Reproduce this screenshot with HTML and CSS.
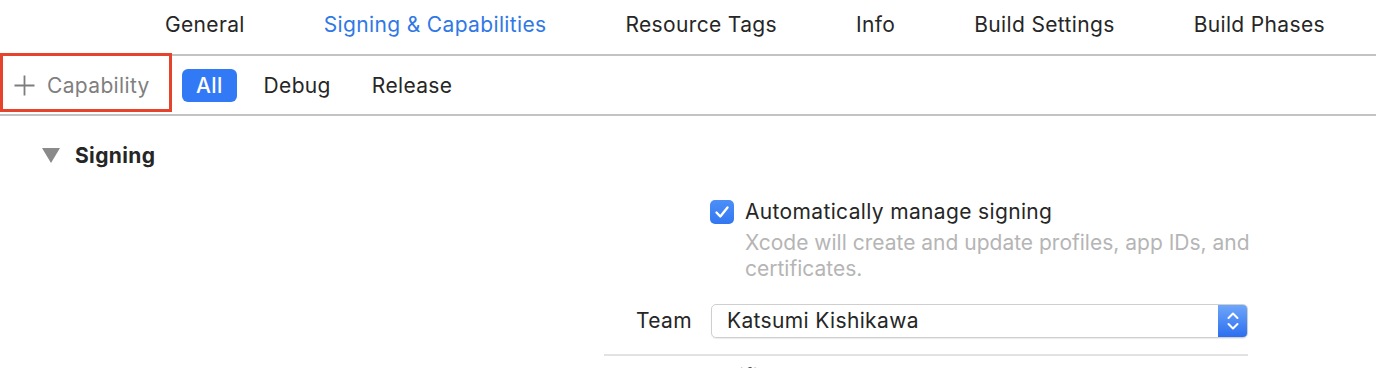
FILE: index.html
```html
<!DOCTYPE html>
<html>
<head>
<meta charset="utf-8">
<link rel="stylesheet" href="styles.css">
</head>
<body>
<div class="page">
  <nav class="tabs">
    <span class="tab">General</span>
    <span class="tab active">Signing &amp; Capabilities</span>
    <span class="tab">Resource Tags</span>
    <span class="tab">Info</span>
    <span class="tab">Build Settings</span>
    <span class="tab">Build Phases</span>
  </nav>
  <div class="toolbar">
    <div class="add-cap">
      <svg class="plus" width="21" height="21" viewBox="0 0 21 21"><path d="M10.5 0.5V20.5M0.5 10.5H20.5" stroke="#7d7d7d" stroke-width="1.8" fill="none"/></svg>
      <span>Capability</span>
    </div>
    <div class="filters">
      <span class="pill selected">All</span>
      <span class="pill">Debug</span>
      <span class="pill">Release</span>
    </div>
    <div class="highlight"></div>
  </div>
  <section class="section">
    <div class="section-head">
      <svg class="disclosure" width="18" height="15" viewBox="0 0 18 15"><path d="M0 0H18L9 15Z" fill="#8a8a8a"/></svg>
      <span>Signing</span>
    </div>
    <div class="form">
      <div class="label"></div>
      <div class="check-row">
        <span class="checkbox"><svg width="24" height="24" viewBox="0 0 24 24"><path d="M6.5 12.5L10.3 16.5L17.5 7.5" stroke="#fff" stroke-width="2.4" fill="none" stroke-linecap="round" stroke-linejoin="round"/></svg></span>
        <span>Automatically manage signing</span>
      </div>
      <div class="label"></div>
      <p class="hint">Xcode will create and update profiles, app IDs, and<br>certificates.</p>
      <div class="label team-label">Team</div>
      <div class="select">
        <span class="select-value">Katsumi Kishikawa</span>
        <span class="stepper"><svg width="14" height="22" viewBox="0 0 14 22"><path d="M2.5 8L7 3.5L11.5 8M2.5 14L7 18.5L11.5 14" stroke="#fff" stroke-width="2" fill="none" stroke-linecap="round" stroke-linejoin="round"/></svg></span>
      </div>
      <div class="divider"></div>
      <div class="label next-label">Bundle Identifier</div>
    </div>
  </section>
</div>
</body>
</html>
```
FILE: styles.css
```css
html, body {
  margin: 0;
  padding: 0;
  background: #ffffff;
  overflow: hidden;
}
body {
  width: 1376px;
  height: 368px;
  font-family: Inter, "Noto Sans", sans-serif;
  font-size: 21px;
  letter-spacing: 0.35px;
  color: #262626;
}
.page {
  position: relative;
}
.tabs {
  display: flex;
  align-items: center;
  gap: 79px;
  height: 48px;
  padding: 1px 0 5px 165px;
  border-bottom: 2px solid #c3c3c3;
  line-height: 24px;
}
.tab {
  white-space: nowrap;
}
.tab.active {
  color: #2f78e6;
}
.toolbar {
  position: relative;
  display: flex;
  align-items: center;
  height: 58px;
  border-bottom: 2px solid #c3c3c3;
}
.add-cap {
  display: flex;
  align-items: center;
  gap: 12px;
  width: 158px;
  padding-left: 14px;
  color: #7f7f7f;
}
.plus {
  display: block;
}
.filters {
  display: flex;
  align-items: center;
  gap: 13px;
  margin-left: 10px;
}
.pill {
  height: 33px;
  line-height: 33px;
  padding: 0 14px;
  border-radius: 6px;
}
.pill.selected {
  background: #3279f5;
  color: #ffffff;
  font-weight: 500;
}
.highlight {
  position: absolute;
  left: 0;
  top: -3px;
  width: 166px;
  height: 53px;
  border: 3px solid #e5432b;
}
.section {
  padding-top: 27px;
}
.section-head {
  display: flex;
  align-items: center;
  gap: 15px;
  padding-left: 42px;
  height: 24px;
  font-weight: 700;
}
.disclosure {
  display: block;
}
.form {
  display: grid;
  grid-template-columns: 88px 537px;
  column-gap: 19px;
  margin-left: 604px;
  margin-top: 32px;
  width: 644px;
  line-height: 26px;
}
.label {
  text-align: right;
}
.check-row {
  display: flex;
  align-items: center;
  gap: 11px;
  margin-left: -1px;
}
.checkbox {
  width: 24px;
  height: 24px;
  border-radius: 5px;
  background: linear-gradient(#4c8ff8, #3277f1);
  display: flex;
}
.checkbox svg {
  display: block;
}
.hint {
  margin: 5px 0 0 34px;
  color: #b5b5b5;
  letter-spacing: 0;
  white-space: nowrap;
}
.team-label {
  margin-top: 22px;
  align-self: center;
  line-height: 34px;
  white-space: nowrap;
}
.select {
  margin-top: 22px;
  display: flex;
  align-items: stretch;
  height: 32px;
  border: 1px solid #cfcfcf;
  border-radius: 5px;
  box-shadow: 0 1px 1px rgba(0,0,0,0.08);
  overflow: hidden;
}
.select-value {
  flex: 1;
  padding-left: 15px;
  line-height: 32px;
}
.stepper {
  width: 29px;
  display: flex;
  align-items: center;
  justify-content: center;
  background: linear-gradient(#6ea6fa, #2c6eef);
}
.divider {
  grid-column: 1 / 3;
  height: 2px;
  background: #e2e2e2;
  margin-top: 16px;
}
.next-label {
  grid-column: 1 / 3;
  text-align: left;
  margin-left: 6px;
  margin-top: 8px;
  white-space: nowrap;
}
```
